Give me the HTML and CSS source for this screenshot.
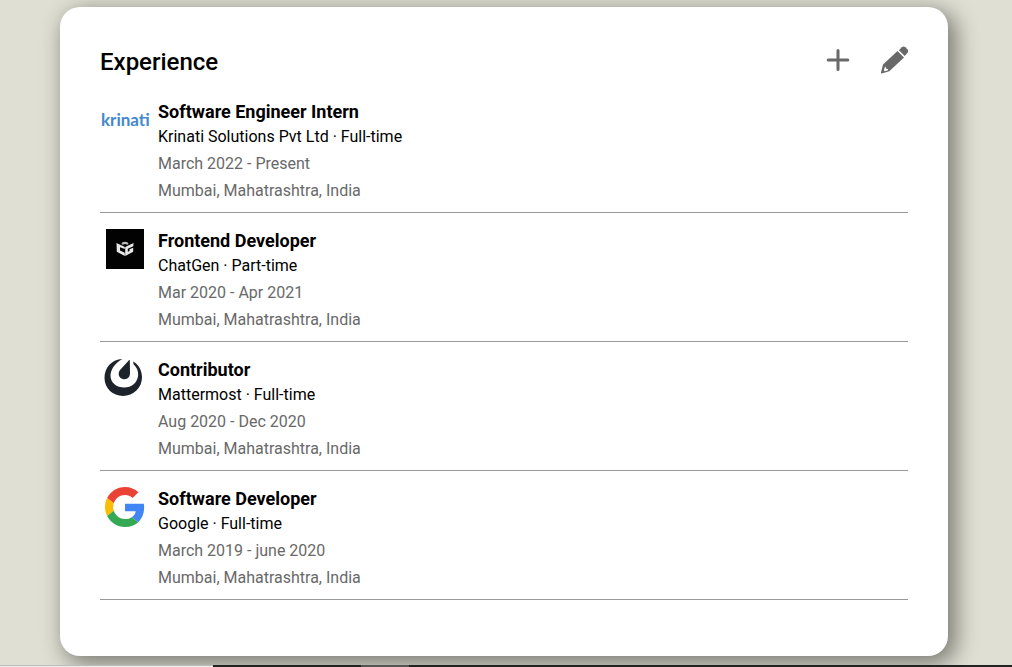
FILE: index.html
```html
<!DOCTYPE html>
<html lang="en">
<head>
<meta charset="utf-8">
<meta name="viewport" content="width=device-width, initial-scale=1">
<title>Experience</title>
<link rel="stylesheet" href="styles.css">
</head>
<body>
<main class="card">
  <header class="card-header">
    <h2 class="card-title">Experience</h2>
    <div class="actions">
      <button class="icon-button" type="button" aria-label="Add experience">
        <svg width="30" height="30" viewBox="0 0 30 30"><path d="M16 5.500V24.500M6.200 15H25.800" stroke="currentColor" stroke-width="3" stroke-linecap="round"/></svg>
      </button>
      <button class="icon-button" type="button" aria-label="Edit experience">
        <svg width="30" height="30" viewBox="-1.500 0 30 30"><path fill="currentColor" fill-rule="evenodd" d="M18 6 24.500 12.400 9.800 26.200 2.200 28.600Q1.200 28.600 1.500 27.600L3.500 19.600ZM5.400 21.800 4.400 25.300 5.300 26.200 8.600 25.200 8.400 24 6.400 23.600 6.100 21.800Z"/><path fill="currentColor" d="M19.400 5.200 22.300 2.200Q24 .7 25.900 2.200L27.900 4.200Q29.500 6 28 7.800L25.200 11.100Z"/></svg>
      </button>
    </div>
  </header>
  <ul class="jobs">
    <li class="job">
      <svg class="logo" viewBox="0 0 50 40" role="img" aria-label="Krinati"><text class="wordmark" x="1" y="26">krinati</text></svg>
      <div>
        <h3 class="role">Software Engineer Intern</h3>
        <p class="company">Krinati Solutions Pvt Ltd · Full-time</p>
        <p class="detail">March 2022 - Present</p>
        <p class="detail">Mumbai, Mahatrashtra, India</p>
      </div>
    </li>
    <li class="job">
      <svg class="logo" viewBox="0 0 50 40" role="img" aria-label="ChatGen"><path d="M6 0H44V40H6Z" fill="#020202"/><path d="M16.500 14 24.800 18V20L20 18.300V21.400L24.800 23.800V27L16.800 22.800ZM33.500 14 25.200 18V27L33.200 22.800V18.800L29.500 20.300V22L27.800 22.800V19.800L33.300 17.200Z" fill="#e8e8e8"/><path d="M21.300 15Q22 12.800 25 12.800 28 12.800 28.700 15L27.200 15.700Q25 14.200 22.800 15.700Z" fill="#bbb"/></svg>
      <div>
        <h3 class="role">Frontend Developer</h3>
        <p class="company">ChatGen · Part-time</p>
        <p class="detail">Mar 2020 - Apr 2021</p>
        <p class="detail">Mumbai, Mahatrashtra, India</p>
      </div>
    </li>
    <li class="job">
      <svg class="logo" viewBox="0 0 50 40" role="img" aria-label="Mattermost"><g fill="#1e222b"><path d="M22.400.9C11 1.500 4.500 10 4.500 20.200 4.700 30.300 12.800 37.900 23 37.900 33.500 37.900 42 30 42 19.300 42 12.500 38.600 6.500 33.200 3.500L33.500 6.200C37 9.500 38.800 13.800 38 18.300 36.800 25.400 31.400 29.500 24.500 29.500 16.500 29.500 10.500 24.800 10.500 17.700 10.500 11 15.500 4.800 22.400.9Z"/><path d="M29.200 1.900 29.800 2 30 15C30 19 27.600 21.200 24.500 21.200 21 21.200 18.700 18.700 18.700 15.900 18.700 14 19.500 12.700 20.700 11.300Z"/></g></svg>
      <div>
        <h3 class="role">Contributor</h3>
        <p class="company">Mattermost · Full-time</p>
        <p class="detail">Aug 2020 - Dec 2020</p>
        <p class="detail">Mumbai, Mahatrashtra, India</p>
      </div>
    </li>
    <li class="job">
      <svg class="logo" viewBox="0 0 50 40" role="img" aria-label="Google"><g transform="translate(5 0) scale(.8333)"><path fill="#EA4335" d="M24 9.500c3.540 0 6.710 1.220 9.210 3.600l6.850-6.850C35.900 2.380 30.470 0 24 0 14.620 0 6.510 5.380 2.560 13.220l7.980 6.190C12.430 13.720 17.740 9.500 24 9.500z"/><path fill="#4285F4" d="M46.980 24.550c0-1.570-.15-3.090-.38-4.550H24v9.020h12.940c-.58 2.960-2.260 5.480-4.780 7.180l7.730 6c4.510-4.180 7.090-10.360 7.090-17.650z"/><path fill="#FBBC05" d="M10.530 28.590c-.48-1.450-.76-2.990-.76-4.590s.27-3.140.76-4.590l-7.980-6.190C.92 16.460 0 20.120 0 24c0 3.880.92 7.540 2.560 10.780l7.970-6.190z"/><path fill="#34A853" d="M24 48c6.480 0 11.930-2.130 15.890-5.810l-7.730-6c-2.150 1.450-4.920 2.300-8.160 2.300-6.260 0-11.570-4.220-13.470-9.910l-7.980 6.190C6.510 42.620 14.620 48 24 48z"/></g></svg>
      <div>
        <h3 class="role">Software Developer</h3>
        <p class="company">Google · Full-time</p>
        <p class="detail">March 2019 - june 2020</p>
        <p class="detail">Mumbai, Mahatrashtra, India</p>
      </div>
    </li>
  </ul>
</main>
<div class="taskbar"><span class="taskbar-search"></span><span class="taskbar-active"></span></div>
</body>
</html>
```
FILE: styles.css
```css
* { box-sizing: border-box; }

body {
  margin: 0;
  min-height: 100vh;
  display: flex;
  flex-direction: column;
  background: #dfdfd3;
  color: #000;
  font-family: Roboto, sans-serif;
  font-size: 16px;
}

h2, h3, p, ul { margin: 0; padding: 0; }

.card {
  flex: 1;
  margin: 7px 64px 9px 60px;
  padding: 38px 40px 40px;
  background: #fff;
  border-radius: 20px;
  box-shadow: 6px 6px 22px 2px rgba(0, 0, 0, 0.45);
}

.card-header {
  display: flex;
  align-items: center;
  justify-content: space-between;
  height: 34px;
  margin-bottom: 5px;
}

.card-title {
  font-size: 24px;
  font-weight: 500;
  line-height: 34px;
}

.actions {
  display: flex;
  gap: 26px;
  align-self: flex-start;
}

.icon-button {
  display: flex;
  padding: 0;
  border: 0;
  background: none;
  color: #696969;
  cursor: pointer;
}

.jobs { list-style: none; }

.job {
  display: flex;
  gap: 8px;
  padding: 16px 0 8px;
  border-bottom: 1px solid #999;
}

.logo {
  flex: none;
  width: 50px;
  height: 40px;
}

.wordmark {
  font-family: Lato, sans-serif;
  font-size: 17px;
  font-weight: 700;
  fill: #4288cb;
}

.role {
  font-size: 18px;
  font-weight: 700;
  line-height: 23px;
}

.company, .detail { line-height: 27px; }

.detail { color: #696969; }

.taskbar {
  display: flex;
  height: 2px;
  background: #222;
}

.taskbar-search {
  width: 213px;
  margin-right: 148px;
  background: #eee;
  border-top: 1px solid #bbb;
}

.taskbar-active {
  width: 48px;
  background: #555;
}
```
